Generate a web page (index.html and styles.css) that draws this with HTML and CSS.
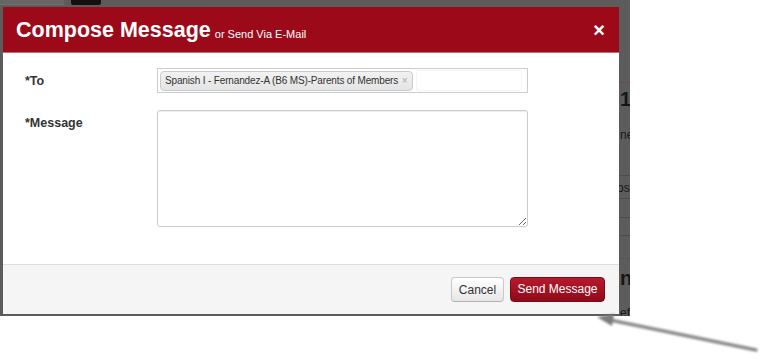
FILE: index.html
```html
<!DOCTYPE html>
<html lang="en">
<head>
  <meta charset="UTF-8" />
  <title>Compose Message</title>
  <link rel="stylesheet" href="styles.css">
</head>
<body>
  <div class="screen">
    <div class="page-top">
      <span class="top-tab"></span>
      <span class="top-btn"></span>
    </div>
    <div class="stage">
      <div class="modal">
        <div class="modal-header">
          <span class="title">Compose Message</span>
          <span class="subtitle">or Send Via E-Mail</span>
          <span class="close">&times;</span>
        </div>
        <div class="modal-body">
          <div class="form-row">
            <label class="form-label">*To</label>
            <div class="to-field">
              <span class="chip">Spanish I - Fernandez-A (B6 MS)-Parents of Members <span class="chip-x">&times;</span></span>
              <span class="to-input"></span>
            </div>
          </div>
          <div class="form-row">
            <label class="form-label">*Message</label>
            <textarea class="message"></textarea>
          </div>
        </div>
        <div class="modal-footer">
          <button class="btn btn-cancel">Cancel</button>
          <button class="btn btn-send">Send Message</button>
        </div>
      </div>
      <!-- page behind the overlay -->
      <div class="peek">
        <div class="pk-top"></div>
        <div class="pk-big">15</div>
        <div class="pk-small">ne</div>
        <div class="pk-line l1"></div>
        <div class="pk-small shifted">os</div>
        <div class="pk-line l2"></div>
        <div class="pk-line l3"></div>
        <div class="pk-line l4"></div>
        <div class="pk-line red l5"></div>
        <div class="pk-big n">n</div>
        <div class="pk-small last">ef</div>
      </div>
    </div>
  </div>

  <svg class="arrow" width="764" height="360" viewBox="0 0 764 360">
    <defs>
      <filter id="soft" x="-10%" y="-50%" width="120%" height="200%">
        <feGaussianBlur stdDeviation="1" />
      </filter>
    </defs>
    <g filter="url(#soft)">
      <line x1="756" y1="350" x2="610" y2="320" stroke="#8c8c8c" stroke-width="3.5" stroke-linecap="round"/>
      <polygon points="597,317 614,314 612,326" fill="#7c7c7c"/>
    </g>
  </svg>
</body>
</html>
```

FILE: styles.css
```css
body {
  margin: 0;
  background: #fff;
  font-family: 'Liberation Sans', Arial, Helvetica, sans-serif;
  position: relative;
  width: 764px;
  height: 360px;
  overflow: hidden;
}
.screen {
  width: 630px;
  height: 316px;
  background: #5c5c5c;
  display: flex;
  flex-direction: column;
}
.page-top {
  height: 5px;
  display: flex;
}
.top-tab {
  width: 64px;
  background: #666;
  border-bottom: 1px solid #707070;
}
.top-btn {
  width: 30px;
  margin-left: 7px;
  background: #111;
  border-radius: 0 0 2px 2px;
}
.stage {
  margin-top: 2px;
  padding-left: 3px;
  display: flex;
}
.modal {
  width: 616px;
  height: 307px;
  background: #fff;
  display: flex;
  flex-direction: column;
}
.modal-header {
  height: 45px;
  background: #9c0a1a;
  border-bottom: 1px solid #c56b73;
  display: flex;
  align-items: center;
  padding: 0 13px;
  color: #fff;
}
.title {
  font-size: 21.5px;
  font-weight: 700;
  padding-top: 2px;
}
.subtitle {
  font-size: 11px;
  margin-left: 4px;
  padding-top: 8px;
}
.close {
  margin-left: auto;
  font-size: 20px;
  font-weight: 700;
  line-height: 1;
  padding-top: 1px;
  margin-right: 1px;
}
.modal-body {
  flex: 1;
  padding: 15px 0 0 22px;
  display: flex;
  flex-direction: column;
  gap: 17px;
}
.form-row {
  display: flex;
  align-items: flex-start;
}
.form-label {
  width: 132px;
  font-size: 12.5px;
  font-weight: 700;
  color: #333;
  line-height: 15px;
  padding-top: 6px;
}
.to-field {
  width: 371px;
  height: 25px;
  box-sizing: border-box;
  border: 1px solid #ccc;
  padding: 2px;
  display: flex;
  align-items: center;
  gap: 3px;
}
.chip {
  height: 20px;
  box-sizing: border-box;
  padding: 0 5px 0 4px;
  border: 1px solid #c6cbd3;
  border-radius: 4px;
  background: linear-gradient(#f2f2f2, #e4e4e4);
  font-size: 10px;
  letter-spacing: -0.15px;
  color: #333;
  line-height: 18px;
  white-space: nowrap;
}
.chip-x {
  color: #aaa;
  font-size: 10px;
  margin-left: 1px;
}
.to-input {
  width: 104px;
  height: 19px;
  border: 1px solid #f4f4f4;
  border-radius: 2px;
}
.message {
  width: 371px;
  height: 117px;
  box-sizing: border-box;
  margin: 0;
  border: 1px solid #ccc;
  border-radius: 3px;
  box-shadow: inset 0 1px 1px rgba(0,0,0,0.075);
  resize: both;
  font-family: inherit;
}
.modal-footer {
  height: 49px;
  border-top: 1px solid #ddd;
  background: #f5f5f5;
  display: flex;
  justify-content: flex-end;
  align-items: center;
  gap: 6px;
  padding-right: 14px;
}
.btn {
  height: 25px;
  font-family: inherit;
  font-size: 12px;
  border-radius: 4px;
  padding: 0;
  white-space: nowrap;
  cursor: pointer;
}
.btn-cancel {
  width: 53px;
  color: #333;
  background: linear-gradient(#fff, #e6e6e6);
  border: 1px solid #c8c8c8;
  border-bottom-color: #b3b3b3;
}
.btn-send {
  width: 95px;
  color: #fff;
  background: linear-gradient(#b51a2c, #8e0a1a);
  border: 1px solid #7f0916;
  margin-top: -1px;
}
.peek {
  width: 11px;
  height: 309px;
  overflow: hidden;
  color: #161616;
  white-space: nowrap;
}
.pk-top {
  height: 75px;
  border-bottom: 1px solid #6a4a4a;
}
.pk-big {
  margin-top: 4px;
  height: 24px;
  line-height: 24px;
  font-size: 20px;
  font-weight: 700;
  padding-left: 1px;
}
.pk-small {
  margin-top: 17px;
  height: 14px;
  line-height: 14px;
  font-size: 12px;
  padding-left: 1px;
}
.pk-small.shifted {
  margin-top: 5px;
  margin-left: -3px;
}
.pk-line {
  border-top: 1px solid #4c4c4c;
}
.l1 { margin-top: 33px; }
.l2 { margin-top: 3px; }
.l3 { margin-top: 18px; }
.l4 { margin-top: 17px; }
.l5 { margin-top: 22px; }
.pk-line.red { border-top-color: #6a4a4a; }
.pk-big.n { margin-top: 7px; }
.pk-small.last { margin-top: 16px; }
.arrow {
  position: absolute;
  left: 0;
  top: 0;
  pointer-events: none;
}
```
